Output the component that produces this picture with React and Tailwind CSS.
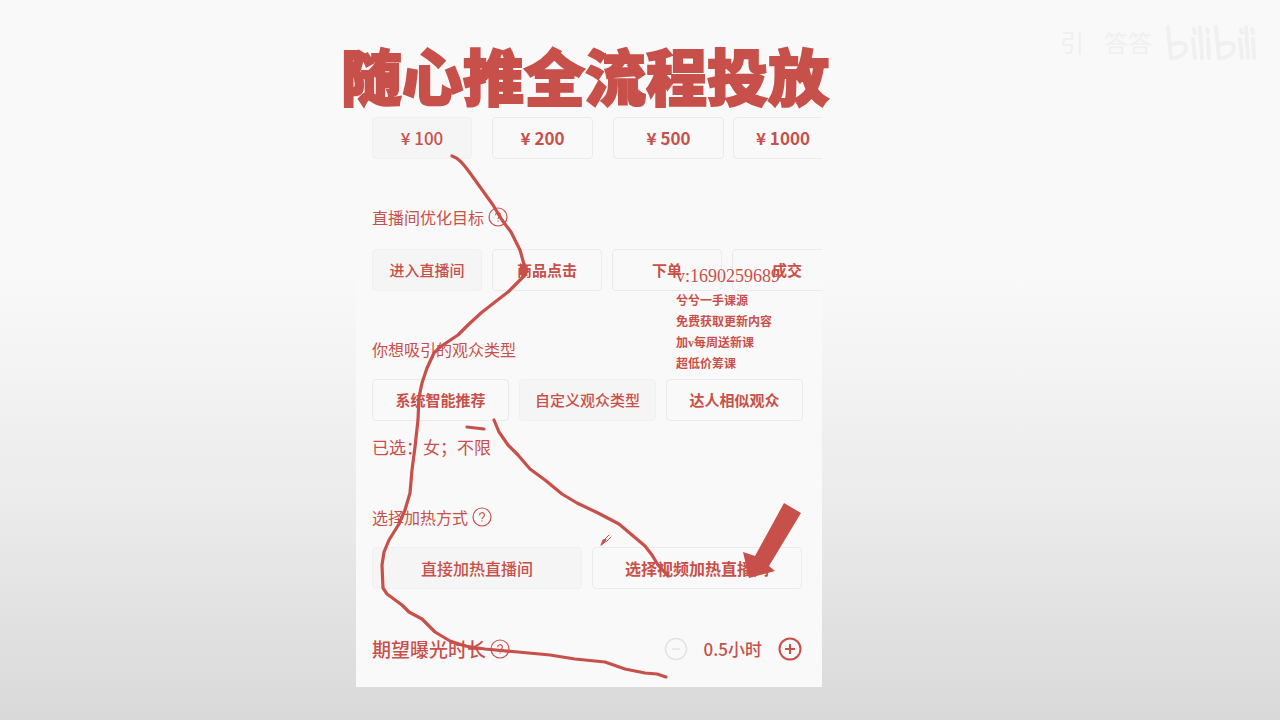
function HelpButton() {
  return (
    <button type="button" aria-label="说明" className="h-5 w-5 shrink-0">
      <svg viewBox="0 0 20 20" className="h-5 w-5" fill="none" stroke="currentColor" strokeWidth="1.2">
        <circle cx="10" cy="10" r="9" />
        <path d="M7.6 8.2a2.4 2.4 0 1 1 3.6 2c-.9.5-1.2.9-1.2 1.8M10 13.4v1.2" />
      </svg>
    </button>
  );
}

function Option({ children, width, filled, light }) {
  return (
    <button
      type="button"
      className={`h-[42px] shrink-0 whitespace-nowrap rounded-sm border ${width} ${
        filled ? "border-[#f0f0f0] bg-[#f5f5f5]" : "border-[#ebebeb]"
      } ${light ? "font-medium" : "font-bold"}`}
    >
      {children}
    </button>
  );
}

function Heading({ children, help, className = "" }) {
  return (
    <div className={`flex h-6 items-center gap-1 text-base ${className}`}>
      <h2>{children}</h2>
      {help && <HelpButton />}
    </div>
  );
}

function Watermark() {
  return (
    <div className="absolute right-6 top-5 flex items-center gap-3 text-[#f0f0f0]">
      <span className="flex gap-5 text-2xl">
        <span>引</span>
        <span>答答</span>
      </span>
      <svg viewBox="0 0 92 44" className="h-11 w-[92px]" fill="none" stroke="currentColor" strokeWidth="4" strokeLinecap="round">
        <path d="M4 7l3 31M7 25c8-4 16-2 15 4s-8 9-14 9M29 19l2 19M30 9l1 4M36 7l2 31M44 19l1 19M43 9l1 4" />
        <path d="M52 7l3 31M55 25c8-4 16-2 15 4s-8 9-14 9M76 19l2 19M77 9l1 4M82 7l2 31M89 19l1 19M88 9l1 4" />
      </svg>
    </div>
  );
}

function Annotations() {
  return (
    <svg
      viewBox="0 0 466 720"
      className="pointer-events-none absolute left-0 top-0 h-[720px] w-[466px]"
      fill="none"
      stroke="currentColor"
      strokeWidth="3.2"
      strokeLinecap="round"
      strokeLinejoin="round"
    >
      <g transform="translate(-356 0)">
        <path d="M452 156C459 158 464 165 470 173L493 205L502 220L511 232L520 250L525 268L524 276L508 292L495 302L481 313L468 325L458 335L440 347L434 353L427 368L422 383L419 397L418 420L415 447L412 470L410 493L405 510L399 524L389 540L384 552L382 565L383 588L387 594L402 605L409 612L422 619L435 632L450 641L465 646L485 649L518 652L550 655L575 659L605 662L625 669L645 673L657 674L666 677" />
        <path d="M494 420L499 432L508 445L518 455L530 469L545 480L562 494L577 503L598 513L619 524L632 535L645 546L652 555L658 565L668 576" />
        <path d="M467 427L484 429" />
        <path d="M520 263L529 269L525 278L519 274Z" fill="currentColor" stroke="none" />
        <path d="M784 503L801 513L769 566L775 571L749 578L743 552L755 556Z" fill="currentColor" stroke="none" />
        <path d="M601 545l2-5 3-1-1 3z" fill="currentColor" strokeWidth="1" />
        <path d="M604 540l5-5M606 542l5-5" strokeWidth="1" />
      </g>
    </svg>
  );
}

export default function App() {
  return (
    <main className="relative min-h-screen overflow-hidden bg-linear-to-b from-[#f9f9f9] from-38% via-[#ebebeb] via-70% to-[#dad9da] pt-10 font-['Noto_Sans_CJK_SC','Noto_Sans',sans-serif] text-[#c8504a]">
      <Watermark />
      <h1 className="flex h-[70px] items-center justify-center whitespace-nowrap pr-[110px] text-[61px] font-black [-webkit-text-stroke:2px_#c8504a]">
        随心推全流程投放
      </h1>
      <div className="-mt-[110px] flex justify-center pr-[102px]">
        <section className="relative w-[466px] overflow-hidden pt-[117px]">
          <div className="bg-[#f9f9f9] pb-6 pl-4 text-[15px]">
            <div className="flex text-[17px]">
              <div className="flex gap-5">
                <Option width="w-[100px]" filled light>¥ 100</Option>
                <Option width="w-[101px]">¥ 200</Option>
                <Option width="w-[111px]">¥ 500</Option>
              </div>
              <div className="pl-[9px]">
                <Option width="w-[100px]">¥ 1000</Option>
              </div>
            </div>
            <Heading help className="mt-[46px]">直播间优化目标</Heading>
            <div className="mt-5 flex gap-[10px]">
              <Option width="w-[110px]" filled light>进入直播间</Option>
              <Option width="w-[110px]">商品点击</Option>
              <Option width="w-[110px]">下单</Option>
              <Option width="w-[110px]">成交</Option>
            </div>
            <Heading className="mt-[46px]">你想吸引的观众类型</Heading>
            <div className="mt-[18px] flex gap-[10px]">
              <Option width="w-[137px]">系统智能推荐</Option>
              <Option width="w-[137px]" filled light>自定义观众类型</Option>
              <Option width="w-[137px]">达人相似观众</Option>
            </div>
            <p className="mt-[14px] text-[17px] leading-6">已选：女；不限</p>
            <Heading help className="mt-[46px]">选择加热方式</Heading>
            <div className="mt-[18px] flex gap-[10px] text-base">
              <Option width="w-[210px]" filled light>直接加热直播间</Option>
              <Option width="w-[210px]">选择视频加热直播间</Option>
            </div>
            <div className="mt-[46px] flex h-7 items-center justify-between pr-5 text-[19px] font-medium">
              <div className="flex items-center gap-1">
                <h2>期望曝光时长</h2>
                <HelpButton />
              </div>
              <div className="flex items-center gap-4">
                <button type="button" aria-label="减少时长" className="text-[#e3e3e3]">
                  <svg viewBox="0 0 24 24" className="h-6 w-6" fill="none" stroke="currentColor" strokeWidth="1.5">
                    <circle cx="12" cy="12" r="10.5" />
                    <path d="M8 12h8" />
                  </svg>
                </button>
                <output className="text-[17px]">0.5小时</output>
                <button type="button" aria-label="增加时长">
                  <svg viewBox="0 0 24 24" className="h-6 w-6" fill="none" stroke="currentColor" strokeWidth="2">
                    <circle cx="12" cy="12" r="10.5" />
                    <path d="M7 12h10M12 7v10" />
                  </svg>
                </button>
              </div>
            </div>
          </div>
          <div className="absolute left-80 top-[266px] whitespace-nowrap font-['Liberation_Serif','Noto_Sans_CJK_SC',serif] text-xs font-bold leading-[21px]">
            <p className="mb-1 text-lg font-normal leading-[21px]">v:1690259689</p>
            <p>兮兮一手课源</p>
            <p>免费获取更新内容</p>
            <p>加v每周送新课</p>
            <p>超低价筹课</p>
          </div>
          <Annotations />
        </section>
      </div>
    </main>
  );
}
